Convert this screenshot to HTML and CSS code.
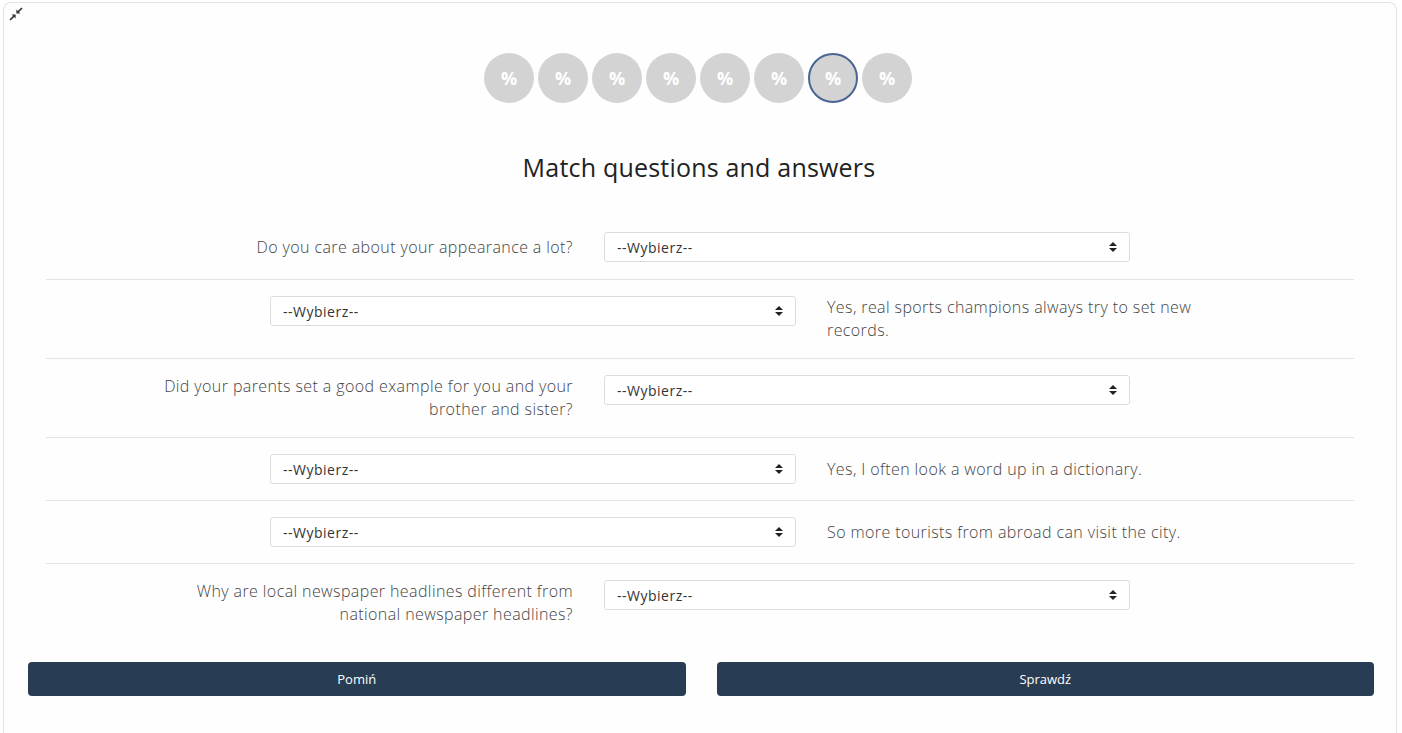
FILE: index.html
```html
<!DOCTYPE html>
<html>
<head>
    <meta charset="utf-8" />
    <title>Match questions and answers</title>
    <link rel="stylesheet" href="styles.css">
</head>
<body>
    <div class="card">
        <div class="card-tools">
            <svg class="icon-compress" width="14" height="14" viewBox="0 0 14 14">
                <path d="M13 1 L8.6 5.4" stroke="#333" stroke-width="1.6" fill="none"/>
                <path d="M7.4 2.6 L7.4 6.6 L11.4 6.6 Z" fill="#333"/>
                <path d="M1 13 L5.4 8.6" stroke="#333" stroke-width="1.6" fill="none"/>
                <path d="M2.6 7.4 L6.6 7.4 L6.6 11.4 Z" fill="#333"/>
            </svg>
        </div>

        <div class="steps">
            <div class="step">%</div>
            <div class="step">%</div>
            <div class="step">%</div>
            <div class="step">%</div>
            <div class="step">%</div>
            <div class="step">%</div>
            <div class="step active">%</div>
            <div class="step">%</div>
        </div>

        <h1 class="title">Match questions and answers</h1>

        <div class="pairs">
            <div class="pair question">
                <div class="pair-text">Do you care about your appearance a lot?</div>
                <div class="select-wrap">
                    <select><option>--Wybierz--</option></select>
                    <svg class="caret" width="8" height="10" viewBox="0 0 8 10"><path d="M4 0 L8 4 L0 4 Z M0 6 L8 6 L4 10 Z" fill="#222"/></svg>
                </div>
            </div>
            <div class="pair answer">
                <div class="select-wrap">
                    <select><option>--Wybierz--</option></select>
                    <svg class="caret" width="8" height="10" viewBox="0 0 8 10"><path d="M4 0 L8 4 L0 4 Z M0 6 L8 6 L4 10 Z" fill="#222"/></svg>
                </div>
                <div class="pair-text">Yes, real sports champions always try to set new records.</div>
            </div>
            <div class="pair question">
                <div class="pair-text">Did your parents set a good example for you and your brother and sister?</div>
                <div class="select-wrap">
                    <select><option>--Wybierz--</option></select>
                    <svg class="caret" width="8" height="10" viewBox="0 0 8 10"><path d="M4 0 L8 4 L0 4 Z M0 6 L8 6 L4 10 Z" fill="#222"/></svg>
                </div>
            </div>
            <div class="pair answer">
                <div class="select-wrap">
                    <select><option>--Wybierz--</option></select>
                    <svg class="caret" width="8" height="10" viewBox="0 0 8 10"><path d="M4 0 L8 4 L0 4 Z M0 6 L8 6 L4 10 Z" fill="#222"/></svg>
                </div>
                <div class="pair-text">Yes, I often look a word up in a dictionary.</div>
            </div>
            <div class="pair answer">
                <div class="select-wrap">
                    <select><option>--Wybierz--</option></select>
                    <svg class="caret" width="8" height="10" viewBox="0 0 8 10"><path d="M4 0 L8 4 L0 4 Z M0 6 L8 6 L4 10 Z" fill="#222"/></svg>
                </div>
                <div class="pair-text">So more tourists from abroad can visit the city.</div>
            </div>
            <div class="pair question">
                <div class="pair-text">Why are local newspaper headlines different from national newspaper headlines?</div>
                <div class="select-wrap">
                    <select><option>--Wybierz--</option></select>
                    <svg class="caret" width="8" height="10" viewBox="0 0 8 10"><path d="M4 0 L8 4 L0 4 Z M0 6 L8 6 L4 10 Z" fill="#222"/></svg>
                </div>
            </div>
        </div>

        <div class="actions">
            <button class="btn">Pomiń</button>
            <button class="btn">Sprawdź</button>
        </div>
    </div>
</body>
</html>
```

FILE: styles.css
```css
html {
    background-color: #fff;
}

body {
    margin: 0;
    padding: 2px 5px 0 3px;
    font-family: "Open Sans", "Noto Sans", sans-serif;
    color: #444;
}

.card {
    border: 1px solid #e2e2e2;
    border-bottom: none;
    border-radius: 8px 8px 0 0;
    background: #fefefe;
    min-height: 740px;
    box-sizing: border-box;
    padding: 0 0 40px;
}

.card-tools {
    height: 0;
    position: relative;
}

.icon-compress {
    position: absolute;
    left: 5px;
    top: 4px;
}

/* kroki */
.steps {
    display: flex;
    justify-content: center;
    gap: 4px;
    padding-top: 50px;
    padding-right: 4px;
}

.step {
    width: 50px;
    height: 50px;
    border-radius: 50%;
    background: #d3d3d3;
    color: #fff;
    font-weight: 700;
    font-size: 18px;
    display: flex;
    align-items: center;
    justify-content: center;
    box-sizing: border-box;
}

.step.active {
    border: 2px solid #4a6593;
}

.title {
    margin: 47px 0 0;
    text-align: center;
    font-size: 25px;
    font-weight: 500;
    letter-spacing: 0.2px;
    color: #222;
    line-height: 34px;
    padding-right: 2px;
}

/* pary */
.pairs {
    margin: 32px 42px 0;
}

.pair {
    display: flex;
    align-items: flex-start;
    gap: 31px;
    padding: 16px 117px;
    border-bottom: 1px solid #e4e4e4;
}

.pair:first-child {
    padding-bottom: 17px;
}

.pair:last-child {
    border-bottom: none;
}

.pair.question {
    justify-content: flex-start;
}

.pair.answer {
    justify-content: flex-end;
}

.pair-text {
    width: 410px;
    min-height: 30px;
    display: flex;
    align-items: center;
    font-size: 16px;
    font-weight: 300;
    letter-spacing: 0.4px;
    line-height: 23px;
    color: #444;
}

.question .pair-text {
    justify-content: flex-end;
    text-align: right;
}

.select-wrap {
    position: relative;
    width: 526px;
}

.select-wrap select {
    appearance: none;
    -webkit-appearance: none;
    width: 100%;
    height: 30px;
    border: 1px solid #dcdcdc;
    border-radius: 3px;
    background: #fff;
    padding: 0 12px;
    font-family: "Open Sans", "Noto Sans", sans-serif;
    font-size: 14px;
    letter-spacing: 0.5px;
    color: #333;
}

.caret {
    position: absolute;
    right: 13px;
    top: 10px;
    pointer-events: none;
}

/* przyciski */
.actions {
    display: flex;
    gap: 31px;
    padding: 20px 22px 0 24px;
}

.btn {
    flex: 1;
    height: 34px;
    border: none;
    border-radius: 4px;
    background: #283d54;
    color: #fff;
    font-family: "Open Sans", "Noto Sans", sans-serif;
    font-size: 13px;
    cursor: pointer;
}
```
